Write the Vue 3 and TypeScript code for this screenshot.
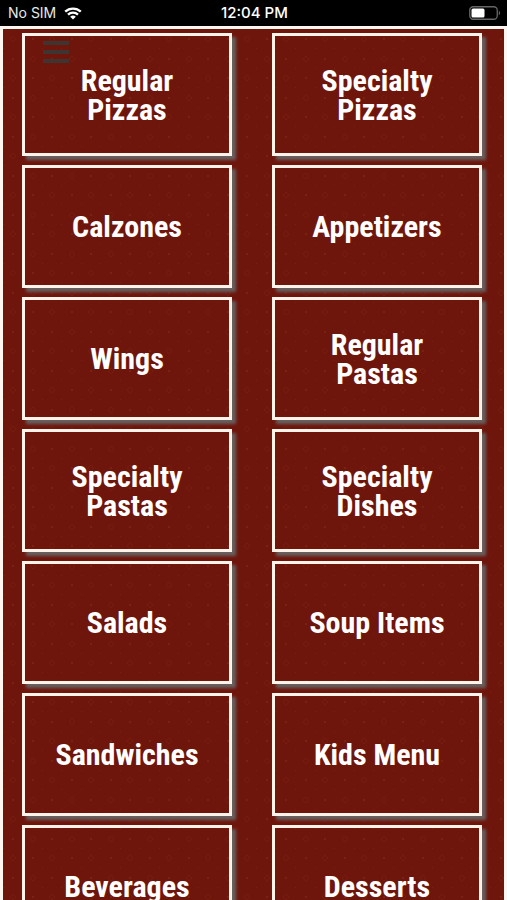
<script setup lang="ts">
interface MenuCategory {
  label: string
  slug: string
}

const categories: MenuCategory[] = [
  { label: 'Regular Pizzas', slug: 'regular-pizzas' },
  { label: 'Specialty Pizzas', slug: 'specialty-pizzas' },
  { label: 'Calzones', slug: 'calzones' },
  { label: 'Appetizers', slug: 'appetizers' },
  { label: 'Wings', slug: 'wings' },
  { label: 'Regular Pastas', slug: 'regular-pastas' },
  { label: 'Specialty Pastas', slug: 'specialty-pastas' },
  { label: 'Specialty Dishes', slug: 'specialty-dishes' },
  { label: 'Salads', slug: 'salads' },
  { label: 'Soup Items', slug: 'soup-items' },
  { label: 'Sandwiches', slug: 'sandwiches' },
  { label: 'Kids Menu', slug: 'kids-menu' },
  { label: 'Beverages', slug: 'beverages' },
  { label: 'Desserts', slug: 'desserts' },
]
</script>

<template>
  <div class="screen">
    <header class="status">
      <div class="carrier">
        <span>No SIM</span>
        <svg class="wifi" viewBox="0 0 18 13" aria-hidden="true">
          <path d="M1.2 4.7a11.2 11.2 0 0 1 15.6 0" />
          <path d="M4 7.7a7.2 7.2 0 0 1 10 0" />
          <path class="wifi-dot" d="M9 12.6 6.2 9.8a4 4 0 0 1 5.6 0Z" />
        </svg>
      </div>
      <time class="clock">12:04 PM</time>
      <div class="power">
        <svg class="battery" viewBox="0 0 32 14" aria-hidden="true">
          <rect class="shell" x="0.75" y="0.75" width="27.5" height="12.5" rx="3.5" />
          <rect class="charge" x="2.5" y="2.5" width="13" height="9" rx="1.5" />
          <path class="tip" d="M29.8 4.8c1.8.7 1.8 3.7 0 4.4Z" />
        </svg>
      </div>
    </header>

    <main class="page">
      <button class="menu-toggle" type="button" aria-label="Menu">
        <svg viewBox="0 0 26 24" aria-hidden="true">
          <path d="M0 3h26M0 12h26M0 21h26" />
        </svg>
      </button>
      <nav class="grid">
        <a v-for="item in categories" :key="item.slug" class="card" :href="`#${item.slug}`">
          <span class="label">{{ item.label }}</span>
        </a>
      </nav>
    </main>
  </div>
</template>

<style>
body {
  background: #000;
}
</style>

<style scoped>
.screen {
  display: flex;
  flex-direction: column;
  height: 100vh;
  overflow: hidden;
}

.status {
  display: grid;
  grid-template-columns: 1fr auto 1fr;
  align-items: center;
  flex: none;
  height: 26px;
  padding: 0 6px 0 8px;
  box-sizing: border-box;
  background: #000;
  color: #e8e8e8;
  font-family: Inter, 'Liberation Sans', sans-serif;
  font-size: 14px;
  line-height: 26px;
}

.carrier {
  display: flex;
  align-items: center;
  gap: 8px;
}

.wifi {
  width: 18px;
  height: 13px;
  fill: none;
  stroke: #fff;
  stroke-width: 2.3;
}

.wifi-dot {
  fill: #fff;
  stroke: none;
}

.clock {
  color: #fff;
  font-size: 15px;
  font-weight: 500;
}

.power {
  display: flex;
  justify-content: flex-end;
}

.battery {
  width: 32px;
  height: 14px;
}

.shell {
  fill: none;
  stroke: #666;
  stroke-width: 1.3;
}

.charge {
  fill: #fff;
}

.tip {
  fill: #666;
}

.page {
  position: relative;
  flex: 1;
  min-height: 0;
  overflow-y: auto;
  scrollbar-width: none;
  border: 3px solid #fff5f1;
  border-bottom: 0;
  background-color: #6e150c;
  background-image: url("data:image/svg+xml,%3Csvg xmlns='http://www.w3.org/2000/svg' width='39' height='39'%3E%3Cg fill='none' stroke='%23852b18' stroke-opacity='.35'%3E%3Cpath d='M10 7l3 3-3 3-3-3zM30 27l3 3-3 3-3-3z'/%3E%3C/g%3E%3Cg fill='%238c3520' fill-opacity='.35'%3E%3Cpath d='M29 9h2v2h-2zM9 29h2v2H9zM19 19h1v1h-1zM0 19h1v1H0zM19 0h1v1h-1zM0 0h1v1H0z'/%3E%3C/g%3E%3C/svg%3E");
}

.menu-toggle {
  position: absolute;
  top: 11px;
  left: 40px;
  width: 26px;
  height: 24px;
  padding: 0;
  border: 0;
  background: none;
  cursor: pointer;
}

.menu-toggle svg {
  display: block;
  width: 26px;
  height: 24px;
  stroke: #3e3432;
  stroke-width: 4;
}

.grid {
  display: grid;
  grid-template-columns: repeat(2, minmax(0, 1fr));
  gap: 9px 40px;
  padding: 4px 22px 9px 19px;
}

.card {
  display: flex;
  align-items: center;
  justify-content: center;
  height: 123px;
  padding: 0 24px;
  box-sizing: border-box;
  border: 3px solid #fff3ea;
  box-shadow: 4px 4px 3px #67605e;
  color: #fff;
  font-family: 'Roboto Condensed', 'Open Sans Condensed', 'Liberation Sans Narrow', 'Liberation Sans', sans-serif;
  font-size: 30px;
  font-weight: 700;
  line-height: 29px;
  text-align: center;
  text-decoration: none;
}

.label {
  max-width: 150px;
}
</style>
